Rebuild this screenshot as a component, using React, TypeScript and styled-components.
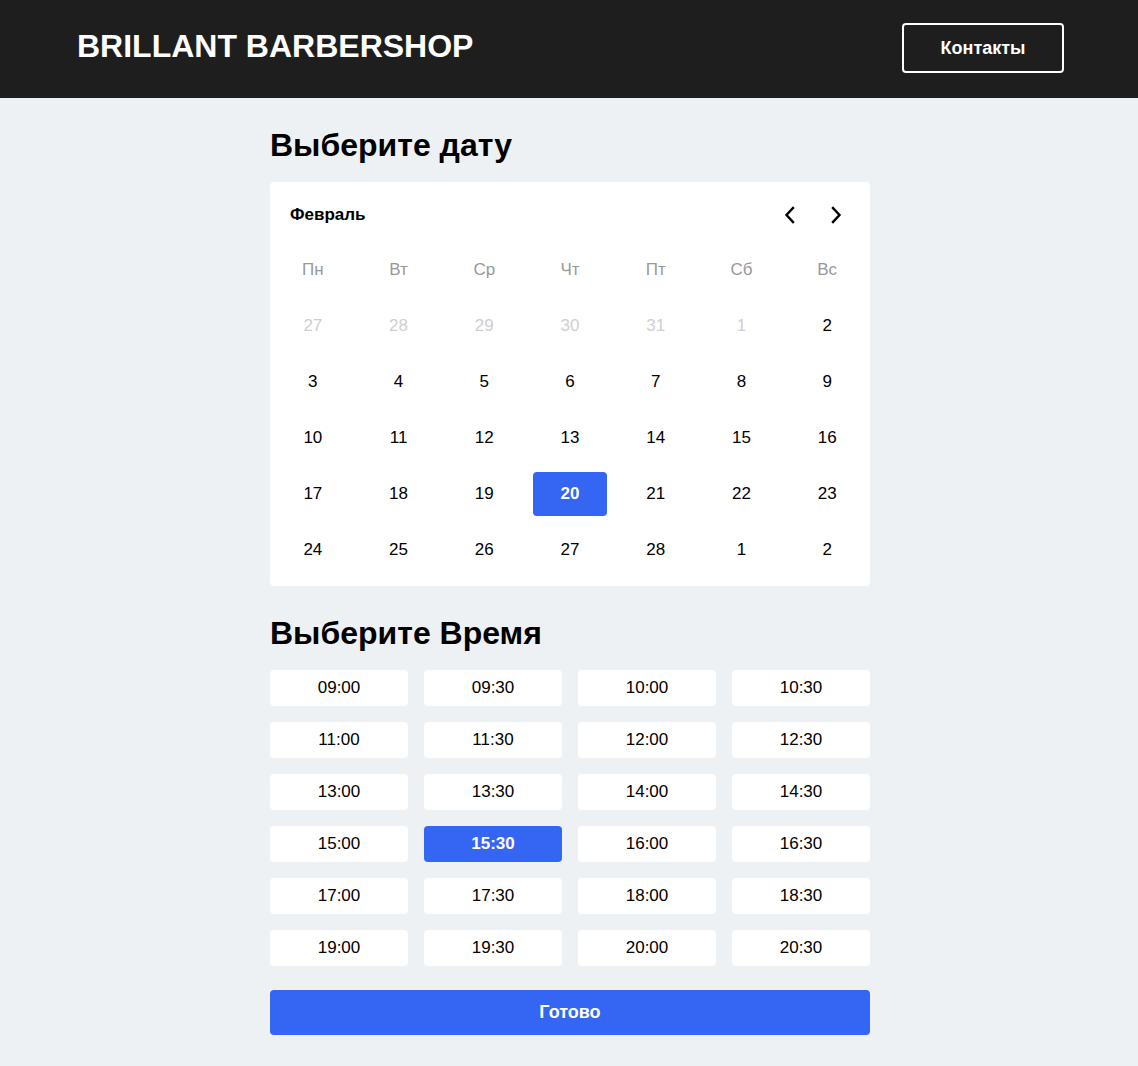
import React, { useState } from "react";
import styled, { createGlobalStyle } from "styled-components";

const Global = createGlobalStyle`
  html, body { margin: 0; padding: 0; }
  body {
    background: #edf1f4;
    font-family: "Liberation Sans", Arial, Helvetica, sans-serif;
    color: #000;
  }
  * { box-sizing: border-box; }
`;

const Header = styled.header`
  height: 98px;
  background: #1e1e1e;
  display: flex;
  align-items: center;
  justify-content: space-between;
  padding: 0 74px 2px 77px;
`;

const Logo = styled.div`
  color: #fff;
  font-weight: 700;
  font-size: 32px;
  margin-bottom: 4px;
`;

const OutlineButton = styled.button`
  width: 162px;
  height: 50px;
  border: 2px solid #fff;
  border-radius: 4px;
  background: transparent;
  color: #fff;
  font-family: inherit;
  font-weight: 700;
  font-size: 18px;
  cursor: pointer;
`;

const Page = styled.div`
  padding-left: 2px;
`;

const Main = styled.main`
  width: 600px;
  margin: 0 auto;
  padding: 27px 0 31px;
  display: flex;
  flex-direction: column;
`;

const Title = styled.h2`
  margin: 0;
  font-size: 32px;
  font-weight: 700;
  line-height: 40px;
  height: 40px;
`;

const Card = styled.div`
  margin-top: 17px;
  background: #fff;
  border-radius: 4px;
  padding-bottom: 14px;
`;

const CalHeader = styled.div`
  height: 65px;
  display: flex;
  align-items: center;
  justify-content: space-between;
  padding: 1px 22px 0 20px;
`;

const Month = styled.div`
  font-weight: 700;
  font-size: 17px;
`;

const Arrows = styled.div`
  display: flex;
  gap: 22px;
`;

const ArrowBtn = styled.button`
  width: 24px;
  height: 24px;
  padding: 0;
  border: none;
  background: none;
  display: flex;
  align-items: center;
  justify-content: center;
  cursor: pointer;
`;

const Grid = styled.div`
  display: grid;
  grid-template-columns: repeat(7, 1fr);
  row-gap: 12px;
  margin-top: 1px;
`;

const Cell = styled.div<{ $muted?: boolean; $head?: boolean; $active?: boolean }>`
  width: 74px;
  height: 44px;
  justify-self: center;
  display: flex;
  align-items: center;
  justify-content: center;
  border-radius: 4px;
  font-size: 17px;
  color: ${(p) => (p.$active ? "#fff" : p.$head ? "#999" : p.$muted ? "#cfcfcf" : "#000")};
  background: ${(p) => (p.$active ? "#3465f3" : "transparent")};
  font-weight: ${(p) => (p.$active ? 700 : 400)};
  cursor: ${(p) => (p.$head ? "default" : "pointer")};
`;

const TimeTitle = styled(Title)`
  margin-top: 27px;
`;

const TimeGrid = styled.div`
  margin-top: 17px;
  display: grid;
  grid-template-columns: repeat(4, 1fr);
  gap: 16px;
`;

const Slot = styled.button<{ $active?: boolean }>`
  height: 36px;
  border: none;
  border-radius: 4px;
  font-family: inherit;
  font-size: 17px;
  font-weight: ${(p) => (p.$active ? 700 : 400)};
  color: ${(p) => (p.$active ? "#fff" : "#000")};
  background: ${(p) => (p.$active ? "#3465f3" : "#fff")};
  cursor: pointer;
`;

const Done = styled.button`
  margin-top: 24px;
  height: 45px;
  border: none;
  border-radius: 4px;
  background: #3465f3;
  color: #fff;
  font-family: inherit;
  font-weight: 700;
  font-size: 18px;
  cursor: pointer;
`;

const Chevron = ({ dir }: { dir: "left" | "right" }) => (
  <svg width="14" height="18" viewBox="0 0 14 18" fill="none">
    <path
      d={dir === "left" ? "M10 2 L3.5 9 L10 16" : "M4 2 L10.5 9 L4 16"}
      stroke="#000"
      strokeWidth="2.4"
      strokeLinecap="square"
      strokeLinejoin="miter"
    />
  </svg>
);

const weekdays = ["Пн", "Вт", "Ср", "Чт", "Пт", "Сб", "Вс"];
const days: { d: number; muted?: boolean }[] = [
  ...[27, 28, 29, 30, 31, 1].map((d) => ({ d, muted: true })),
  ...Array.from({ length: 27 }, (_, i) => ({ d: i + 2 })),
  { d: 1 },
  { d: 2 },
];

const times: string[] = [];
for (let h = 9; h <= 20; h++) {
  const hh = String(h).padStart(2, "0");
  times.push(`${hh}:00`, `${hh}:30`);
}

export default function App() {
  const [day, setDay] = useState(20);
  const [time, setTime] = useState("15:30");
  return (
    <>
      <Global />
      <Header>
        <Logo>BRILLANT BARBERSHOP</Logo>
        <OutlineButton>Контакты</OutlineButton>
      </Header>
      <Page>
        <Main>
          <Title>Выберите дату</Title>
          <Card>
            <CalHeader>
              <Month>Февраль</Month>
              <Arrows>
                <ArrowBtn aria-label="prev">
                  <Chevron dir="left" />
                </ArrowBtn>
                <ArrowBtn aria-label="next">
                  <Chevron dir="right" />
                </ArrowBtn>
              </Arrows>
            </CalHeader>
            <Grid>
              {weekdays.map((w) => (
                <Cell key={w} $head>
                  {w}
                </Cell>
              ))}
              {days.map((x, i) => (
                <Cell
                  key={i}
                  $muted={x.muted}
                  $active={!x.muted && i < 33 && x.d === day}
                  onClick={() => !x.muted && setDay(x.d)}
                >
                  {x.d}
                </Cell>
              ))}
            </Grid>
          </Card>
          <TimeTitle>Выберите Время</TimeTitle>
          <TimeGrid>
            {times.map((t) => (
              <Slot key={t} $active={t === time} onClick={() => setTime(t)}>
                {t}
              </Slot>
            ))}
          </TimeGrid>
          <Done>Готово</Done>
        </Main>
      </Page>
    </>
  );
}
